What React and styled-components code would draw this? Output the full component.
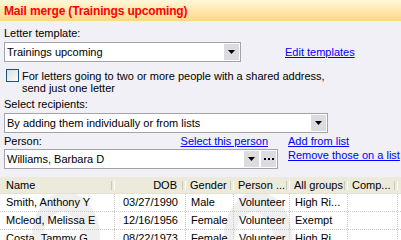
import React from "react";
import styled, { createGlobalStyle } from "styled-components";

const Global = createGlobalStyle`
  html, body { margin: 0; padding: 0; width: 401px; height: 240px; overflow: hidden; background: #f1f0f6; }
  body { font-family: "Liberation Sans", Arial, sans-serif; font-size: 11px; color: #000; }
  * { box-sizing: border-box; }
`;

const Page = styled.div`
  width: 401px;
  height: 240px;
  overflow: hidden;
  display: flex;
  flex-direction: column;
`;

const TitleBar = styled.div`
  flex: none;
  height: 21px;
  padding-left: 4px;
  display: flex;
  align-items: center;
  background: linear-gradient(#fff7da, #ffd886);
  color: #f00;
  font-weight: bold;
  font-size: 12px;
  letter-spacing: -0.15px;
`;

const Form = styled.div`
  padding: 6px 4px 0;
  display: flex;
  flex-direction: column;
`;

const Label = styled.div`
  line-height: 13px;
  height: 13px;
  white-space: nowrap;
  margin-top: ${(p) => p.$mt || 0}px;
`;

const FieldRow = styled.div`
  display: flex;
  align-items: center;
  margin-top: 2px;
`;

const Select = styled.div`
  width: ${(p) => p.$w}px;
  height: 20px;
  flex: none;
  border: 1px solid #a3a3a8;
  background: #fff;
  display: flex;
  align-items: center;
  gap: 2px;
  padding-left: 2px;
`;

const SelectText = styled.span`
  flex: 1;
  white-space: nowrap;
  overflow: hidden;
`;

const Btn = styled.span`
  flex: none;
  width: 15px;
  height: 16px;
  background: #dcdce0;
  display: flex;
  align-items: center;
  justify-content: center;
  &:last-child { margin-right: 1px; }
`;

const Link = styled.a`
  color: #0000ff;
  text-decoration: underline;
  line-height: 13px;
  white-space: nowrap;
  cursor: pointer;
  margin-left: ${(p) => p.$ml || 0}px;
`;

const CheckRow = styled.div`
  display: flex;
  align-items: flex-start;
  margin-top: 7px;
  padding-left: 2px;
  gap: 3px;
`;

const Check = styled.span`
  flex: none;
  width: 13px;
  height: 13px;
  border: 1px solid #1c5180;
  background: linear-gradient(135deg, #dcdcd7, #fbfbf9);
`;

const CheckText = styled.div`
  line-height: 12px;
  padding-top: 1px;
`;

const PersonGrid = styled.div`
  display: grid;
  grid-template-columns: 274px auto;
  column-gap: 10px;
  row-gap: 1px;
  margin-top: 2px;
  align-items: start;
`;

const PersonHead = styled.div`
  display: flex;
  justify-content: space-between;
  padding-right: 10px;
  line-height: 13px;
`;

const LinkCol = styled.div`
  display: flex;
  flex-direction: column;
  gap: 1px;
`;

const Table = styled.div`
  margin-top: 8px;
  display: flex;
  flex-direction: column;
`;

const cols = "115px 71px 48px 56px 58px 50px 1fr";

const HeaderRow = styled.div`
  display: grid;
  grid-template-columns: ${cols};
  height: 17px;
  background: #ebeadb;
  border-bottom: 1px solid #e2e1d4;
`;

const HCell = styled.div`
  position: relative;
  line-height: 16px;
  padding: 0 ${(p) => (p.$right ? 9 : 4)}px 0 ${(p) => (p.$first ? 6 : 4)}px;
  text-align: ${(p) => (p.$right ? "right" : "left")};
  white-space: nowrap;
  overflow: hidden;
  &::after {
    content: "";
    display: ${(p) => (p.$last ? "none" : "block")};
    position: absolute;
    right: 0;
    top: 4px;
    width: 2px;
    height: 9px;
    border-left: 1px solid #cbc8b6;
    border-right: 1px solid #fff;
  }
`;

const Body = styled.div`
  position: relative;
  background: #fff;
`;

const Watermark = styled.svg`
  position: absolute;
  left: 0;
  top: 0;
  width: 401px;
  height: 60px;
  z-index: 0;
`;

const Row = styled.div`
  position: relative;
  z-index: 1;
  display: grid;
  grid-template-columns: ${cols};
  height: 18px;
  border-bottom: 1px dotted #c8c8c8;
`;

const Cell = styled.div`
  line-height: 17px;
  padding: 0 ${(p) => (p.$right ? 7 : 4)}px 0 ${(p) => (p.$first ? 6 : 5)}px;
  text-align: ${(p) => (p.$right ? "right" : "left")};
  white-space: nowrap;
  overflow: hidden;
  border-right: ${(p) => (p.$last ? "none" : "1px dotted #c8c8c8")};
`;

const Arrow = () => (
  <svg width="7" height="4" viewBox="0 0 7 4">
    <polygon points="0,0 7,0 3.5,4" fill="#000" />
  </svg>
);

const Dots = () => (
  <svg width="10" height="2" viewBox="0 0 10 2">
    <rect x="0" y="0" width="2" height="2" fill="#000" />
    <rect x="4" y="0" width="2" height="2" fill="#000" />
    <rect x="8" y="0" width="2" height="2" fill="#000" />
  </svg>
);

const Penguin = ({ cx }) => (
  <g>
    <ellipse cx={cx} cy={42} rx={34} ry={44} fill="#efefef" />
    <ellipse cx={cx - 4} cy={50} rx={20} ry={32} fill="#fcfcfc" />
    <ellipse cx={cx - 8} cy={56} rx={16} ry={8} fill="#fbf2de" />
  </g>
);

const rows = [
  ["Smith, Anthony Y", "03/27/1990", "Male", "Volunteer", "High Ri..."],
  ["Mcleod, Melissa E", "12/16/1956", "Female", "Volunteer", "Exempt"],
  ["Costa, Tammy G", "08/22/1973", "Female", "Volunteer", "High Ri..."],
];

export default function App() {
  return (
    <Page>
      <Global />
      <TitleBar>Mail merge (Trainings upcoming)</TitleBar>
      <Form>
        <Label>Letter template:</Label>
        <FieldRow>
          <Select $w={237}>
            <SelectText>Trainings upcoming</SelectText>
            <Btn><Arrow /></Btn>
          </Select>
          <Link $ml={44}>Edit templates</Link>
        </FieldRow>
        <CheckRow>
          <Check />
          <CheckText>
            For letters going to two or more people with a shared address,
            <br />
            send just one letter
          </CheckText>
        </CheckRow>
        <Label $mt={4}>Select recipients:</Label>
        <FieldRow>
          <Select $w={324}>
            <SelectText>By adding them individually or from lists</SelectText>
            <Btn><Arrow /></Btn>
          </Select>
        </FieldRow>
        <PersonGrid>
          <PersonHead>
            <span>Person:</span>
            <Link>Select this person</Link>
          </PersonHead>
          <Link>Add from list</Link>
          <Select $w={274}>
            <SelectText>Williams, Barbara D</SelectText>
            <Btn><Arrow /></Btn>
            <Btn><Dots /></Btn>
          </Select>
          <LinkCol>
            <Link>Remove those on a list</Link>
          </LinkCol>
        </PersonGrid>
      </Form>
      <Table>
        <HeaderRow>
          <HCell $first>Name</HCell>
          <HCell $right>DOB</HCell>
          <HCell>Gender</HCell>
          <HCell>Person ...</HCell>
          <HCell>All groups</HCell>
          <HCell>Comp...</HCell>
          <HCell $last />
        </HeaderRow>
        <Body>
          <Watermark viewBox="0 0 401 60">
            <Penguin cx={66} />
            <Penguin cx={258} />
          </Watermark>
          {rows.map((r, i) => (
            <Row key={i}>
              <Cell $first>{r[0]}</Cell>
              <Cell $right>{r[1]}</Cell>
              <Cell>{r[2]}</Cell>
              <Cell>{r[3]}</Cell>
              <Cell>{r[4]}</Cell>
              <Cell />
              <Cell $last />
            </Row>
          ))}
        </Body>
      </Table>
    </Page>
  );
}
